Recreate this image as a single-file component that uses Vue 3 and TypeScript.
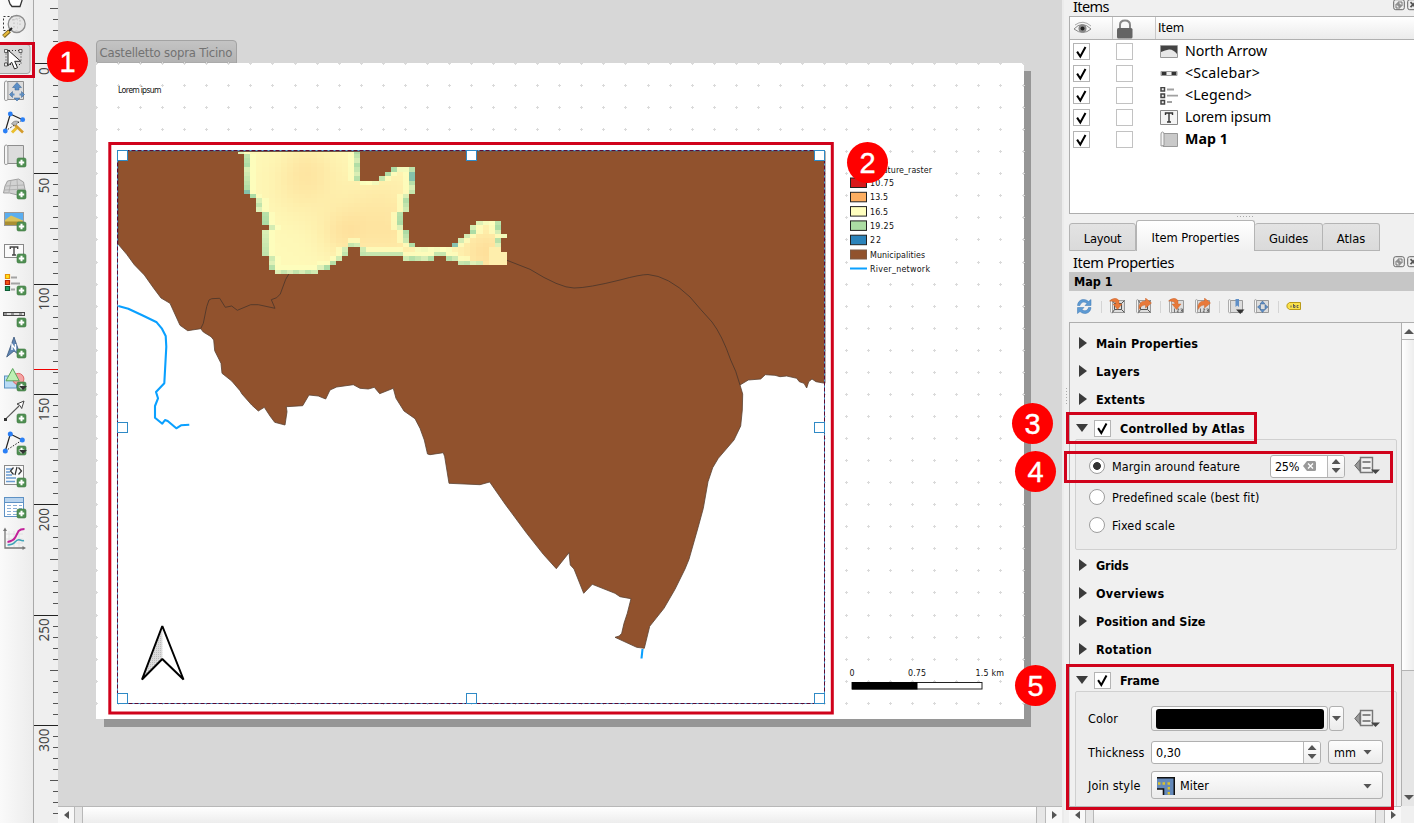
<script setup lang="ts">
type Tool = { id: string; art: string }

const badge = (y = 19, menu = false): string =>
  `<rect x="17" y="${y}" width="9" height="9" rx="1.6" fill="#4f8f52" stroke="#3f7a43" stroke-width=".6"/>` +
  `<path d="M21.5 ${y + 1.8}v5.4M18.8 ${y + 4.5}h5.4" stroke="#fff" stroke-width="2"/>` +
  (menu ? `<path d="M19 ${y + 4}h8l-4 4z" fill="#333"/>` : '')

const sheet =
  '<path d="M7.5 6.5h16v18h-16z" fill="#dcdcdc" stroke="#8e8e8e"/><path d="M4.5 24.5V8q0-2 1.7-2t1.7 2v16q0 1.500-1.700 1.500t-1.700-1z" fill="#f4f4f4" stroke="#999"/>'

const tools: Tool[] = [
  { id: 'pan', art: '<path d="M8 19l2 6 2 2.500h8l2-6V14l-4-4z" fill="#fff" stroke="#333" stroke-width="1.300"/>' },
  {
    id: 'zoom',
    art: '<rect x="3.500" y="5.500" width="14" height="14" fill="none" stroke="#333" stroke-dasharray="2 2"/><circle cx="16.700" cy="13" r="8.500" fill="#e4e4e4" fill-opacity=".9" stroke="#8b8b8b" stroke-width="1.300"/><path d="M12 9l8-2M14 8v9M20 9v7" stroke="#aaa" stroke-width=".7" stroke-dasharray="1.500 2" fill="none"/><path d="M3.500 25.500l6-5.500" stroke="#7a6420" stroke-width="4"/><path d="M3.800 25l5.500-5" stroke="#e8bb3c" stroke-width="2.300"/><path d="M9 20l3-3" stroke="#222" stroke-width="2"/>',
  },
  {
    id: 'select',
    art: '<rect x="-3" y="1.500" width="33" height="29" rx="3" fill="#d9d9d9" stroke="#a6a6a6"/><path d="M6 7.500h15v14H6z" fill="none" stroke="#333" stroke-dasharray="1 2"/><path d="M4.500 6.500h3v3h-3zM19 6.500h3v3h-3zM4.500 20h3v3h-3z" fill="#eee" stroke="#444" stroke-width=".8"/><path d="M8 7v15.500l3.700-3.200 2.800 6.700 3-1.300-2.800-6.400h6z" fill="#fff" stroke="#222" stroke-width="1"/>',
  },
  {
    id: 'move-content',
    art:
      sheet +
      '<path d="M17 7.500l4.500 5h-2.500v2.500h-4v-2.500h-2.500zM9.500 19.500l3-3v6zM24.500 19.500l-3-3v6zM17 26l-3-3h6z" fill="#5b8fc7" stroke="#39618f" stroke-width=".5"/><path d="M13 18.500h1.500v2H13zM19.500 18.500H21v2h-1.500z" fill="#5b8fc7"/>',
  },
  {
    id: 'edit-nodes',
    art: '<path d="M5.300 24l5-17 12.400 5.700" fill="none" stroke="#222" stroke-width="1.200"/><path d="M5.300 24l17.400-11.300" stroke="#222" stroke-dasharray="1.500 1.500"/><circle cx="10.300" cy="7" r="2.400" fill="#2a7ff5"/><circle cx="22.700" cy="12.700" r="2.400" fill="#2a7ff5"/><circle cx="5.300" cy="24" r="2.400" fill="#2a7ff5"/><path d="M12 25.500l6-6" stroke="#eabf2f" stroke-width="3"/><path d="M14.500 17.500l8.500 8" stroke="#d49b2b" stroke-width="2.600"/><path d="M11.500 17q2-4 7-2.500l-3 4z" fill="#bbb" stroke="#777" stroke-width=".7"/>',
  },
  { id: 'add-map', art: sheet + badge() },
  {
    id: 'add-3d-map',
    art:
      '<path d="M3.500 22q1-8 4-12l11-2 5 3 2 10-8 3-8-2z" fill="#d2d2d2" stroke="#999" stroke-width=".9"/><path d="M6 15l18-1M4.500 19l20-1M11 9.500L9 21M17 8.500l1 15" stroke="#aaa" stroke-width=".8" fill="none"/>' +
      badge(),
  },
  {
    id: 'add-picture',
    art:
      '<rect x="4.500" y="9.500" width="19" height="13" fill="#5aaef0" stroke="#999"/><path d="M5 17l6-4.500 12 5V22H5z" fill="#d9c25c"/><path d="M5 18.500h18V22H5z" fill="#a98f33"/>' +
      badge(),
  },
  {
    id: 'add-label',
    art:
      '<rect x="4.500" y="9.500" width="19" height="13" fill="#fafafa" stroke="#888"/><path d="M10.300 14v-2h7.400v2M14 12v8M12 20h4" fill="none" stroke="#444" stroke-width="1.400"/>' +
      badge(),
  },
  {
    id: 'add-legend',
    art:
      '<path d="M5.500 7.500h4v4h-4z" fill="#ffe21a" stroke="#e5900b" stroke-width="1.200"/><path d="M5.500 13.500h4v4h-4z" fill="#f85515" stroke="#b3230c" stroke-width="1.200"/><path d="M5.500 19.500h4v4h-4z" fill="#1fa163" stroke="#0d5f35" stroke-width="1.200"/><path d="M11 10.500h6M11 16.500h9M11 22.500h4" stroke="#a3a3a3" stroke-width="1.800"/>' +
      badge(),
  },
  {
    id: 'add-scalebar',
    art: '<rect x="3.500" y="13.500" width="21" height="3" fill="#ddd" stroke="#444"/><path d="M4 15h3M11 15h3M19 15h3" stroke="#999" stroke-width="2"/>' + badge(),
  },
  {
    id: 'add-north-arrow',
    art:
      '<path d="M14 6l6.500 19-6.500-5-7.300 6z" fill="#5f86b5" stroke="#38557a" stroke-width=".8"/><path d="M12 19v-5.500l3.500 5V13" fill="none" stroke="#fff" stroke-width="1.400"/>' +
      badge(18),
  },
  {
    id: 'add-shape',
    art:
      '<rect x="4.500" y="13" width="12" height="12" fill="#b9dbf5" stroke="#5c93c0"/><circle cx="18.300" cy="16" r="5.600" fill="#f4a3a3" stroke="#d66"/><path d="M12.700 5.500l6.500 12.300H6z" fill="#bdf0b5" stroke="#5ba45b"/>' +
      badge(19, true),
  },
  {
    id: 'add-arrow',
    art:
      '<path d="M5.300 24.300L19 11" stroke="#555" stroke-width="1.100"/><path d="M24 6l-2.300 7.500-1.700-3-3-1.500z" fill="#fff" stroke="#444"/><rect x="4" y="23" width="3" height="3" fill="#333"/>' +
      badge(),
  },
  {
    id: 'add-node-item',
    art:
      '<path d="M5.300 24l5-17 12 6" fill="none" stroke="#222" stroke-width="1.200"/><path d="M5.300 24l17-11" stroke="#222" stroke-dasharray="1.500 1.500"/><circle cx="10.300" cy="7" r="2.500" fill="#2a7ff5"/><circle cx="22.300" cy="13" r="2.500" fill="#2a7ff5"/><circle cx="5.300" cy="24" r="2.500" fill="#2a7ff5"/>' +
      badge(19, true),
  },
  {
    id: 'add-html',
    art:
      '<rect x="4.500" y="6.500" width="19" height="19" fill="#fafafa" stroke="#8a8a8a"/><path d="M6 10h6M6 13h4M6 16h6M6 19h10M6 22.500h9" stroke="#6a9bd1" stroke-width="1.500"/><path d="M13.500 8.500l-3 3.500 3 3.500M18.500 8.500l3 3.500-3 3.500M17 8l-2 8" fill="none" stroke="#333" stroke-width="1.200"/>' +
      badge(),
  },
  {
    id: 'add-table',
    art:
      '<rect x="4.500" y="6.500" width="19" height="19" fill="#fff" stroke="#5e91c4"/><rect x="5" y="7" width="18" height="4" fill="#b9d4ee"/><path d="M5 11.500h18" stroke="#5e91c4"/><path d="M7 14.500h4M13 14.500h4M19 14.500h3M7 17.500h4M13 17.500h4M19 17.500h3M7 20.500h4M13 20.500h4M7 23.500h4M13 23.500h4" stroke="#88aed6" stroke-width="1.200"/>' +
      badge(18),
  },
  {
    id: 'add-elevation',
    art: '<path d="M9 8v16M14 8v16M19 8v16M6 11h17M6 16h17M6 20h17" stroke="#ddd" stroke-width=".8"/><path d="M5 6v19h19" fill="none" stroke="#777" stroke-width="1.300"/><path d="M5 4.500L3 8h4zM26 25l-3.500-2v4z" fill="#777"/><path d="M7.500 19q6-1 8-5t3-6q2-2 6-2" fill="none" stroke="#c2209a" stroke-width="1.900"/><path d="M7.500 22q5 0 7.500-3t5-2 4 .5" fill="none" stroke="#3fa3b8" stroke-width="1.500"/>',
  },
]

const CHECK = 'M3.600 7.600L6.800 12.600L12 3'

/* ruler ------------------------------------------------------------- */
const ticks = Array.from({ length: 74 }, (_, i) => {
  const n = i - 5
  return { y: Math.round(63 + n * 11.03) + 0.5, from: n % 10 === 0 ? 34 : n % 5 === 0 ? 50 : 53, major: n % 10 === 0, n }
}).filter((t) => t.y > 0 && t.y < 823)
const tickLabels = [0, 50, 100, 150, 200, 250, 300].map((v) => ({ v, y: 64 + v * 2.206 + (v === 0 ? 11 : v < 100 ? 19 : 26) }))

/* page grid --------------------------------------------------------- */
const crosses: string = (() => {
  let d = ''
  for (let i = 0; i <= 42; i++)
    for (let j = 0; j <= 29; j++) {
      const x = Math.round(96 + i * 22.06) + 0.5
      const y = Math.round(63 + j * 22.06) + 0.5
      if (x > 1024 || y > 719) continue
      d += `M${x - 1.5} ${y}h3M${x} ${y - 1.5}v3`
    }
  return d
})()

/* temperature raster: column spans for each row --------------------- */
const spans: number[][][] = [
  [[0, 20]],
  [[1, 20]], [[1, 20]], [[1, 20]],
  [[1, 20], [25, 29]],
  [[1, 20], [24, 29]],
  [[1, 20], [23, 29]],
  [[1, 29]], [[1, 29]], [[1, 29]],
  [[2, 28]],
  [[3, 28]], [[3, 28]], [[3, 28]],
  [[4, 27]], [[4, 27]],
  [[4, 27], [39, 43]],
  [[5, 27], [38, 43]],
  [[4, 28], [38, 43]],
  [[4, 28], [37, 44]],
  [[4, 28], [36, 43]],
  [[4, 29], [35, 43]],
  [[4, 18], [20, 43]],
  [[4, 18], [20, 44]],
  [[5, 17], [27, 32], [34, 44]],
  [[5, 16], [36, 44]],
  [[5, 15]],
  [[6, 13]],
]
const inside = (r: number, c: number): boolean => (r < 0 ? true : (spans[r] ?? []).some(([a, b]) => c >= a && c < b))
const mix = (a: number[], b: number[], t: number): number[] => a.map((v, i) => v + (b[i] - v) * t)
const hot = [
  [10, 8, 4, 0.45],
  [17, 18.5, 3, 0.6],
  [23, 13, 5, 0.55],
  [11, 3, 3, 0.35],
  [25, 20, 3, 0.35],
  [40, 22.5, 3, 0.9],
]
const cells = spans.flatMap((row, r) =>
  row.flatMap(([a, b]) =>
    Array.from({ length: b - a }, (_, k) => {
      const c = a + k
      const side = !inside(r, c - 1) || !inside(r, c + 1)
      const below = !inside(r + 1, c)
      const above = !inside(r - 1, c)
      const noise = ((c * 37 + r * 61 + c * r * 7) % 11) / 11
      let heat = 0
      for (const [x, y, s, w] of hot) heat += w * Math.exp(-((c - x) ** 2 + (0.75 * (r - y)) ** 2) / (2 * s * s))
      let rgb = mix([254, 249, 184], [254, 221, 152], Math.min(1, heat))
      const second = !inside(r, c - 2) || !inside(r, c + 2) || !inside(r + 2, c)
      if (second && !(r > 19 && c > 37)) rgb = mix(rgb, [253, 255, 190], 0.7)
      if (above && r > 0) rgb = mix([254, 255, 190], [240, 248, 186], noise)
      if (below && c < 40) rgb = mix([222, 240, 184], [178, 222, 166], noise)
      if (side && c < 43) rgb = mix([222, 240, 182], [168, 218, 163], noise)
      if ((side && c < 10 && r === 9) || (c === 13 && r === 27) || (c === 28 && (r === 5 || r === 6))) rgb = [132, 194, 170]
      if (c > 34 && c < 40 && above && side && noise > 0.4) rgb = [136, 194, 176]
      if (r > 21 && c > 40) rgb = [254, 238, 172]
      const y = r === 0 ? 151.5 : 154 + (r - 1) * 4.444
      const x = 238 + c * 6.113
      return { x, y, h: (r === 0 ? 154 : 154 + r * 4.444) - y + 0.05, f: `rgb(${rgb.map(Math.round).join(',')})` }
    }),
  ),
)

const handles = [
  [117.500, 150.500], [466.500, 150.500], [814.500, 150.500],
  [117.500, 422.500], [814.500, 422.500],
  [117.500, 693.500], [466.500, 693.500], [814.500, 693.500],
]

const classes = [
  { c: '#d7191c', t: '10.75', w: 24 },
  { c: '#fdae61', t: '13.5', w: 18 },
  { c: '#ffffbf', t: '16.5', w: 18 },
  { c: '#abdda4', t: '19.25', w: 24 },
  { c: '#2b83ba', t: '22', w: 11 },
].map((e, i) => ({ ...e, y: 178 + i * 14.3 }))

/* panels ------------------------------------------------------------ */
const items = [
  { t: 'North Arrow', w: 82, art: '<path d="M.5 2.500h17v12H.5z" fill="#e8e8e8" stroke="#999"/><path d="M1 3h16v8q-4-5-8-4.500T1 9z" fill="#444"/>' },
  { t: '<Scalebar>', w: 75, art: '<rect x=".5" y="6" width="17" height="5" rx="1" fill="#999"/><path d="M2 8.500h4M12 8.500h4" stroke="#333" stroke-width="3"/><path d="M7 8.500h4" stroke="#eee" stroke-width="3"/>' },
  { t: '<Legend>', w: 67, art: '<path d="M1 .5h3.500v3.500H1zM1 7h3.500v3.500H1zM1 13.500h3.500V17H1z" fill="#eee" stroke="#444" stroke-width="1.500"/><path d="M7 2.500h7M7 8.700h11M7 15h5" stroke="#a0a0a0" stroke-width="1.800"/>' },
  { t: 'Lorem ipsum', w: 86, art: '<path d="M.5 1.500h17v14H.5z" fill="#f4f4f4" stroke="#888"/><path d="M5.500 6V4h7v2M9 4v9M7 13h4" fill="none" stroke="#333" stroke-width="1.400"/>' },
  { t: 'Map 1', w: 43, bold: true, art: '<path d="M3 2.500h14.500v13H3z" fill="#c9c9c9" stroke="#999"/><path d="M1 15V3q0-2 1.500-2T4 3v11.500z" fill="#f4f4f4" stroke="#999"/>' },
]

const tabs = [
  { t: 'Layout', w: 37.500, box: 'tab-layout' },
  { t: 'Item Properties', w: 88, box: 'tab-props' },
  { t: 'Guides', w: 39, box: 'tab-guides' },
  { t: 'Atlas', w: 28.500, box: 'tab-atlas' },
]

const mini = '<path d="M3.500 2.500h12v12h-12z" fill="#ddd" stroke="#999"/><path d="M1.500 14V3q0-1.500 1-1.500t1 1.500v12h-1z" fill="#f6f6f6" stroke="#999" stroke-width=".8"/>'
const inArrow = '<path d="M.5 3Q6-2 10 2.500V6h3L8.500 11.500 4 6h3Q7 3 .5 3z" fill="#e8793a" stroke="#c55c20" stroke-width=".4"/>'
const outArrow = '<path d="M4 11.500Q3 3 10.500 3V0l6 5-6 5V7Q6.500 6.500 4 11.500z" fill="#e8793a" stroke="#c55c20" stroke-width=".4"/>'
const extent = '<path d="M5.500 5.500h7v6h-7zM3.500 2.500l2 3M15.500 2.500l-3 3M15.500 14.500l-3-3M3.500 14.500l2-3" fill="none" stroke="#555"/>'
const digits = '<path d="M6.500 10.500v4M9 11h2l-2 3h2M12.500 11h2v1.500h-1.500 1.500V14h-2" fill="none" stroke="#666" stroke-width=".9"/>'
const mapTools: { k: string; art?: string }[] = [
  { k: 'refresh', art: '<path d="M1.500 7.500C2 1 9 0 12.500 3.500L15 1.500v6H9l2-2C8 3 5 4 4 7.500zM15 9.500c-.5 6.500-7.500 7.500-11 4L1.500 15.500v-6H8l-2 2c2.500 2.500 6 1 6.500-2z" fill="#5d9ad3" stroke="#3a75b0" stroke-width=".5"/>' },
  { k: 'sep-1' },
  { k: 'set-extent', art: mini + extent + inArrow },
  { k: 'view-extent', art: mini + extent + outArrow },
  { k: 'sep-2' },
  { k: 'set-scale', art: mini + digits + inArrow },
  { k: 'view-scale', art: mini + digits + outArrow },
  { k: 'sep-3' },
  { k: 'bookmark', art: mini + '<path d="M8.500 1h3.500v8l-1.750-1.500-1.750 1.500z" fill="#5f8fc7"/><path d="M9 11.500h8.500L13.250 16z" fill="#333"/>' },
  { k: 'move', art: mini + '<path d="M9.500 3L12 6H7zM9.500 14.500L7 11.500h5zM4.500 9l3-2.500v5zM15 9l-3-2.500v5z" fill="#5f8fc7" stroke="#39618f" stroke-width=".5"/>' },
  { k: 'sep-4' },
  { k: 'label', art: '<path d="M3.500 4.500h11v7h-11L1 9.500v-3z" fill="#fbe14b" stroke="#b99a1a"/><path d="M5 7.500v2M7.500 6v3.500h1.500v-2H7.500M12.500 7.500h-1.500v2h1.500" fill="none" stroke="#555" stroke-width=".9"/>' },
]

const topSections = [{ t: 'Main Properties', w: 102 }, { t: 'Layers', w: 44 }, { t: 'Extents', w: 49 }]
const midSections = [{ t: 'Grids', w: 32.5 }, { t: 'Overviews', w: 68.5 }, { t: 'Position and Size', w: 109.5 }, { t: 'Rotation', w: 56 }]
const radios = [
  { t: 'Margin around feature', w: 128, on: true },
  { t: 'Predefined scale (best fit)', w: 147.5, on: false },
  { t: 'Fixed scale', w: 63, on: false },
]

const callouts = [1, 2, 3, 4, 5]

/* Spreads a label's glyphs so it occupies the given width in pixels. */
const vFit = {
  mounted(el: HTMLElement, { value }: { value: number }) {
    const n = (el.textContent ?? '').length
    if (n) el.style.letterSpacing = `${(value - el.getBoundingClientRect().width) / n}px`
  },
}
</script>

<template>
  <div class="window">
    <aside class="tools">
      <svg v-for="t in tools" :key="t.id" width="34" height="32" viewBox="0 0 34 32" v-html="t.art" />
    </aside>

    <svg class="ruler" width="25" height="823" viewBox="33 0 25 823">
      <path d="M33.500 0V823" stroke="#a9a9a9" />
      <path v-for="t in ticks" :key="t.n" :d="`M${t.from} ${t.y}H58`" :stroke="t.major ? '#222' : '#555'" />
      <path d="M34 369.500H58" stroke="#f00000" />
      <text v-for="l in tickLabels" :key="l.v" :transform="`translate(48.500 ${l.y}) rotate(-90)`" class="tick">{{ l.v }}</text>
    </svg>

    <main class="stage">
      <svg width="1004" height="806" viewBox="58 0 1004 806">
        <defs>
          <linearGradient id="tabFill" x1="0" y1="0" x2="0" y2="1">
            <stop offset="0" stop-color="#c4c4c4" /><stop offset="1" stop-color="#b3b3b3" />
          </linearGradient>
          <pattern id="hatch" width="2" height="2" patternUnits="userSpaceOnUse">
            <rect width="2" height="2" fill="#dcdcdc" /><rect width="1" height="1" fill="#bdbdbd" />
          </pattern>
        </defs>
        <path d="M96.500 63V44q0-3.500 3.500-3.500H233q3.500 0 3.500 3.500V63z" fill="url(#tabFill)" stroke="#a3a3a3" />
        <text x="99.500" y="57" textLength="133" class="page-tab">Castelletto sopra Ticino</text>
        <rect x="104" y="71" width="927" height="656" fill="#969696" />
        <rect x="96" y="63" width="928" height="656" fill="#fff" />
        <path :d="crosses" stroke="#dadada" fill="none" />
        <text x="118" y="93" textLength="43.500" class="note">Lorem ipsum</text>

        <rect x="118" y="151" width="707" height="553" fill="#fff" />
        <path
          d="M118 151.500H825V383.300L816 381.700 812 379 808.700 381.700 806.700 388 804 383.300 799.300 381.700 796.700 378.300 786.700 376 780 376.700 775 375.300 765.300 374.700 760.700 379 748.300 380 740 385 742.700 394 742.300 410 740.700 426 734 440 718.300 458.300 712.700 467.700 708 481.700 703.300 508.300 698 527.700 689 559.300 685 569 675 589.300 664 608.300 649.700 626.300 644.300 648.300 636.700 647.300 615 637.300 619.300 636 621.700 633.300 624 623.300 627.300 613.300 631 598.700 620 596.700 615 593.300 592.300 584.300 583.700 593.300 574 569 570.300 565 569 552.700 556.300 568.700 543.300 554.300 526.700 533.300 505 504 489.700 482 480 484.700 449 483.300 444.700 456.700 443.300 452.700 430 454.700 427.500 454 424.300 440 420 428.300 415 418.700 404 411 396 398.300 393.300 388.300 379.700 393.700 374.300 387.300 368.300 389 360 388.300 353.300 384.700 336.700 387 330 390 325.700 399 318.300 396 309 395 302.700 405.700 286.300 406.700 287 411.700 285 425 274.700 422.300 270 416 264.300 407.300 258.300 411 251.700 405 242 394 240 390.700 231.700 381 222 373.300 221 363.300 214.700 350.700 213.700 340 211 336.700 203.300 332 200.700 328.700 187.700 330.700 180 325.300 170 303.300 161 298 153.300 287.700 144.300 275 134.300 264.700 126.700 254.300 118 244z"
          fill="#91522d" stroke="#5b4333" stroke-width=".8"
        />
        <path
          d="M200.700 328.700L203.300 323.300 206.700 306.700 209 300 211.700 298.700 219.700 298.300 225.300 307.300 231.700 306 237.300 310.300 250.700 304.700H258.300L275 308.300 271.300 299.700 276.700 297.700 280.300 294 285.700 279.300 289 273.700M507 260.300L530 269.300Q560 288 574 288T620 280Q640 274.500 648 274.500Q668 276 690 297Q700 309 712 322Q722 335 730.700 360Q736 370 740 385"
          fill="none" stroke="#50382a" stroke-width=".9"
        />
        <g shape-rendering="crispEdges">
          <rect v-for="(c, i) in cells" :key="i" :x="c.x" :y="c.y" width="6.150" :height="c.h" :fill="c.f" />
        </g>
        <path
          d="M118.300 306L128.300 308.700 143.300 315.700 156.700 322.300 161.700 328.300 165.700 336 166.300 346.700 164.300 383.300 156 392 158 398.300 155 406V417.700L162.300 423.700 165 420 167.700 421 176.300 428.300 181 425.300 189.300 424.700M642.500 649L641.500 658.500"
          fill="none" stroke="#0aa0ff" stroke-width="2.100" stroke-linejoin="round"
        />

        <path d="M162.300 626L142 679.500 162.300 659z" fill="url(#hatch)" />
        <path d="M162.300 626L142 679.500 162.300 659 183.500 679.500z" fill="none" stroke="#000" stroke-width="2" stroke-linejoin="bevel" />

        <rect x="117.500" y="150.500" width="707" height="553" fill="none" stroke="#5a0a35" />
        <rect x="117.500" y="150.500" width="707" height="553" fill="none" stroke="#4aa3d8" stroke-dasharray="2 4" />
        <rect v-for="(h, i) in handles" :key="i" :x="h[0]" :y="h[1]" width="10" height="10" fill="#fff" stroke="#2f8ac6" />
        <rect x="109.800" y="143.500" width="722.500" height="569.500" fill="none" stroke="#d0021b" stroke-width="3" />

        <rect x="848.500" y="153" width="103" height="124" fill="#fff" />
        <text x="853" y="172.500" textLength="79" class="small">Temperature_raster</text>
        <g v-for="e in classes" :key="e.t">
          <rect x="850.500" :y="e.y" width="16" height="9.500" :fill="e.c" stroke="#222" />
          <text x="870" :y="e.y + 8" :textLength="e.w" class="small">{{ e.t }}</text>
        </g>
        <rect x="850.500" y="250" width="16" height="9" fill="#91522d" stroke="#7c5b47" />
        <text x="870" y="258" textLength="55" class="small">Municipalities</text>
        <path d="M850 268.500h17" stroke="#0aa0ff" stroke-width="2" />
        <text x="870" y="271.800" textLength="60" class="small">River_network</text>

        <text x="849.500" y="676" textLength="5" class="small">0</text>
        <text x="908" y="676" textLength="18" class="small">0.75</text>
        <text x="975.500" y="676" textLength="28.500" class="small">1.5 km</text>
        <rect x="852" y="682.500" width="130" height="6.500" fill="#fff" stroke="#222" />
        <rect x="852" y="682" width="65.500" height="7.500" fill="#000" />
      </svg>
      <div class="hbar"><i class="arrow left"></i><b></b><i class="arrow right"></i></div>
    </main>

    <section class="side">
      <header class="title">
        <span v-fit="36">Items</span>
        <svg width="32" height="12" viewBox="0 0 32 12">
          <rect x=".7" y=".7" width="10.600" height="10" rx="2" fill="#eee" stroke="#666" /><path d="M5 3h4v4H5zM3 5h4v4H3z" fill="#eee" stroke="#666" stroke-width=".9" />
          <rect x="14.700" y=".7" width="10.600" height="10" rx="2" fill="#eee" stroke="#666" /><path d="M17.500 3.200l5 5M22.500 3.200l-5 5" stroke="#555" stroke-width="1.700" />
        </svg>
      </header>
      <div class="tree">
        <div class="tree-head">
          <span class="th-eye">
            <svg width="20" height="16" viewBox="0 0 20 16"><path d="M1 9q8-9 17 0-8 7-17 0z" fill="#f2f2f2" stroke="#888" /><path d="M2 5q8-6 16 1" fill="none" stroke="#aaa" /><circle cx="9.500" cy="8.500" r="4" fill="#888" /><circle cx="9.500" cy="8.500" r="2" fill="#222" /></svg>
          </span>
          <span class="th-lock">
            <svg width="18" height="20" viewBox="0 0 18 20"><path d="M4 10V6q0-4.500 5-4.500T14 6v4" fill="none" stroke="#888" stroke-width="2" /><rect x="1" y="9" width="15.500" height="10.500" rx="1.500" fill="#646464" /></svg>
          </span>
          <span class="th-item"><span v-fit="26">Item</span></span>
        </div>
        <div v-for="it in items" :key="it.t" class="tree-row">
          <svg class="box" width="17" height="17" viewBox="0 0 17 17"><rect x=".5" y=".5" width="16" height="16" fill="#fff" stroke="#b4b4b4" /><path :d="CHECK" transform="translate(.500 1)" fill="none" stroke="#000" stroke-width="2" /></svg>
          <svg class="box lock" width="17" height="17" viewBox="0 0 17 17"><rect x=".5" y=".5" width="16" height="16" fill="#fff" stroke="#c2c2c2" /></svg>
          <svg class="pic" width="19" height="18" viewBox="0 0 19 18" v-html="it.art" />
          <span v-fit="it.w" :class="{ strong: it.bold }">{{ it.t }}</span>
        </div>
      </div>
      <div class="grip"></div>
      <nav class="tabs">
        <div v-for="t in tabs" :key="t.t" class="tab" :class="t.box"><span v-fit="t.w">{{ t.t }}</span></div>
      </nav>
      <header class="title second">
        <span v-fit="101">Item Properties</span>
        <svg width="32" height="12" viewBox="0 0 32 12">
          <rect x=".7" y=".7" width="10.600" height="10" rx="2" fill="#eee" stroke="#666" /><path d="M5 3h4v4H5zM3 5h4v4H3z" fill="#eee" stroke="#666" stroke-width=".9" />
          <rect x="14.700" y=".7" width="10.600" height="10" rx="2" fill="#eee" stroke="#666" /><path d="M17.500 3.200l5 5M22.500 3.200l-5 5" stroke="#555" stroke-width="1.700" />
        </svg>
      </header>
      <div class="caption"><span v-fit="38.500">Map 1</span></div>
      <div class="map-tools">
        <template v-for="m in mapTools" :key="m.k">
          <svg v-if="m.art" width="18" height="17" viewBox="0 0 18 17" v-html="m.art" />
          <i v-else></i>
        </template>
      </div>

      <div class="scroller">
        <div class="props">
          <div v-for="s in topSections" :key="s.t" class="sec"><i class="tri"></i><span v-fit="s.w">{{ s.t }}</span></div>
          <div class="sec open">
            <i class="tri down"></i>
            <svg width="17" height="17" viewBox="0 0 17 17"><rect x=".5" y=".5" width="16" height="16" fill="#fff" stroke="#b4b4b4" /><path :d="CHECK" transform="translate(.500 .500)" fill="none" stroke="#000" stroke-width="2" /></svg>
            <span v-fit="125">Controlled by Atlas</span>
          </div>
          <div class="group atlas">
            <div v-for="r in radios" :key="r.t" class="radio-row">
              <i class="radio" :class="{ on: r.on }"></i>
              <div class="radio-text"><span v-fit="r.w">{{ r.t }}</span></div>
              <template v-if="r.on">
                <div class="spin pct">
                  <span v-fit="24">25%</span>
                  <svg width="13" height="10" viewBox="0 0 13 10"><path d="M4 0h7.500q1.500 0 1.500 1.500v7Q13 10 11.500 10H4L0 5z" fill="#999" /><path d="M5 2.500l5 5M10 2.500l-5 5" stroke="#fff" stroke-width="1.300" /></svg>
                  <div class="steps"><i></i><i></i></div>
                </div>
                <svg class="override" width="27" height="20" viewBox="0 0 27 20"><path d="M6 3.500L.8 9.500 6 15.500z" fill="#999" stroke="#666" /><path d="M6.500 1.500h12v15h-12z" fill="#f0f0f0" stroke="#777" stroke-width="1.400" /><path d="M8.500 6h8M8.500 12h8" stroke="#666" stroke-width="1.600" /><path d="M17 13.500h9l-4.500 4.500z" fill="#444" /></svg>
              </template>
            </div>
          </div>
          <div v-for="s in midSections" :key="s.t" class="sec"><i class="tri"></i><span v-fit="s.w">{{ s.t }}</span></div>
          <div class="sec open frame-head">
            <i class="tri down"></i>
            <svg width="17" height="17" viewBox="0 0 17 17"><rect x=".5" y=".5" width="16" height="16" fill="#fff" stroke="#b4b4b4" /><path :d="CHECK" transform="translate(.500 .500)" fill="none" stroke="#000" stroke-width="2" /></svg>
            <span v-fit="39.500">Frame</span>
          </div>
          <div class="group frame">
            <div class="field color">
              <label><span v-fit="30">Color</span></label>
              <div class="btn swatch"><b></b></div>
              <div class="btn more"><i class="caret"></i></div>
              <svg class="override" width="27" height="20" viewBox="0 0 27 20"><path d="M6 3.500L.8 9.500 6 15.500z" fill="#999" stroke="#666" /><path d="M6.500 1.500h12v15h-12z" fill="#f0f0f0" stroke="#777" stroke-width="1.400" /><path d="M8.500 6h8M8.500 12h8" stroke="#666" stroke-width="1.600" /><path d="M17 13.500h9l-4.500 4.500z" fill="#444" /></svg>
            </div>
            <div class="field thick">
              <label><span v-fit="56.500">Thickness</span></label>
              <div class="spin"><span v-fit="25">0,30</span><div class="steps"><i></i><i></i></div></div>
              <div class="btn unit"><span v-fit="22">mm</span><i class="caret"></i></div>
            </div>
            <div class="field join">
              <label><span v-fit="52.500">Join style</span></label>
              <div class="btn combo">
                <svg width="18" height="18" viewBox="0 0 18 18"><path d="M0 1h17.500v17H7v-6H0z" fill="#6489ba" /><path d="M0 .8h17.300V18M0 12h6.500v6" fill="none" stroke="#111" stroke-width="1.600" /><path d="M1 6.500h2.500M5.500 6.500H8M10.500 6.500H13M11.800 10v2.500M11.800 15v2.500" stroke="#dcc22c" stroke-width="2.300" /></svg>
                <span v-fit="29">Miter</span><i class="caret"></i>
              </div>
            </div>
          </div>
        </div>
        <div class="vbar"><div class="vbtn"><i class="arrow up"></i></div><b></b><div class="vbtn end"><i class="arrow down"></i></div></div>
      </div>
      <div class="hbar props-bar"><i class="arrow left"></i><b></b><i class="arrow right"></i></div>
    </section>

    <div class="splitter"></div>
    <div class="mark m1"></div>
    <div class="mark m3"></div>
    <div class="mark m4"></div>
    <div class="mark m5"></div>
    <div v-for="n in callouts" :key="n" class="ball" :class="'b' + n">{{ n }}</div>
  </div>
</template>

<style>
html, body { margin: 0; overflow: hidden; }
</style>

<style scoped>
.window { position: relative; width: 1414px; height: 823px; overflow: hidden; display: flex; background: #f0f0f0; color: #000; font: 12.5px "DejaVu Sans Condensed", "DejaVu Sans", sans-serif; font-stretch: condensed; }
.window * { box-sizing: border-box; }
span { white-space: nowrap; }
svg { display: block; flex: none; }
.tools { width: 33px; flex: none; display: flex; flex-direction: column; margin-top: -21px; height: 844px; background: linear-gradient(90deg, #fafafa, #ececec); overflow: hidden; }
.ruler { background: #efefef; }
.tick { font: 13.5px "Noto Sans", sans-serif; fill: #444; }
.stage { width: 1004px; flex: none; background: #d7d7d7; }
.page-tab { font: 13px "DejaVu Sans Condensed", "DejaVu Sans", sans-serif; font-stretch: condensed; fill: #727272; }
.small { font: 8.8px "DejaVu Sans Condensed", "DejaVu Sans", sans-serif; font-stretch: condensed; fill: #111; }
.note { font: 8px "Noto Sans", sans-serif; fill: #111; }

.hbar { height: 17px; display: flex; align-items: center; background: #e6e6e6; border-top: 1px solid #b8b8b8; }
.hbar b { flex: 1; height: 16px; margin: 0 8px 0 7px; border: solid #b8b8b8; border-width: 0 1px; background: linear-gradient(#fff, #ededed); }
.arrow { flex: none; width: 17px; height: 16px; display: flex; align-items: center; justify-content: center; background: #f8f8f8; }
.hbar .arrow { border: solid #b8b8b8; border-width: 0 1px 0 0; }
.hbar .arrow.right { border-width: 0 0 0 1px; }
.arrow::after { content: ""; border: solid transparent; border-width: 4.5px 0; }
.arrow.left::after { border-right: 5px solid #555; }
.arrow.right::after { border-left: 5px solid #555; }
.arrow.up::after, .arrow.down::after { border-width: 0 5px; }
.arrow.up::after { border-bottom: 5px solid #555; }
.arrow.down::after { border-top: 5px solid #555; }

.side { width: 352px; flex: none; display: flex; flex-direction: column; padding-left: 7px; border-left: 2px solid #ebebeb; overflow: hidden; }
.side > * { flex: none; margin-left: -2px; }
.title { height: 16px; display: flex; align-items: center; padding-left: 4px; font: 14.5px/15px "Noto Sans", sans-serif; }
.title span { line-height: 13px; margin-top: -3px; }
.title svg { margin: -6px -11px 0 auto; }
.props-bar { width: 332px; }
.tree { height: 198px; border: 1px solid #aeaeae; border-right: 0; background: #fff; font: 14.2px "Noto Sans", sans-serif; }
.tree-head { height: 23px; display: flex; border-bottom: 1px solid #b0b0b0; background: linear-gradient(#fff, #ebebeb); }
.tree-head > span { display: flex; align-items: center; }
.th-eye { width: 43px; border-right: 1px solid #c8c8c8; padding-left: 3px; }
.th-lock { width: 43px; border-right: 1px solid #c8c8c8; padding: 2px 0 0 3px; }
.tree-head > .th-item { padding: 0 0 2px 2px; font: 13px "DejaVu Sans Condensed", sans-serif; font-stretch: condensed; }
.tree-row { height: 22px; display: flex; align-items: center; padding: 1px 0 0 3px; }
.tree-row span { line-height: 20px; margin-top: -2px; }
.lock { margin-left: 26px; }
.pic { margin: 0 6px 0 27px; }
.strong { font-weight: 700; }
.grip { height: 6px; width: 18px; margin: 0 0 0 165px; background: radial-gradient(circle, #aaa 0.7px, transparent 0.9px) 0 1px / 3px 3px repeat-x; }
.tabs { display: flex; align-items: flex-end; height: 31px; font-size: 12.8px; }
.tab { height: 28px; display: flex; align-items: center; justify-content: center; border: 1px solid #b4b4b4; border-left: 0; border-radius: 3px 3px 0 0; background: linear-gradient(#e3e3e3, #dadada); padding-top: 2px; }
.tab-layout { width: 67px; border-left: 1px solid #b4b4b4; }
.tab-props { width: 119px; height: 31px; border-bottom: 0; border-left: 1px solid #b4b4b4; background: linear-gradient(#fff, #f0f0f0); }
.tab-guides { width: 68px; }
.tab-atlas { width: 57px; }
.title.second { height: 21px; padding-top: 3px; }
.title.second span { margin-top: -2px; }
.title.second svg { margin-top: -3px; }
.caption { height: 19px; display: flex; align-items: center; padding-left: 5px; background: #c6c6c6; font-weight: 700; }
.map-tools { height: 31px; display: flex; align-items: center; padding-left: 7px; gap: 8px; }
.map-tools i { width: 1px; height: 12px; margin: 0 -1px 0 -1px; background: #d4d4d4; }
.scroller { height: 484px; display: flex; border: solid #aeaeae; border-width: 1px 0 0 1px; overflow: hidden; }
.props { width: 331px; flex: none; height: 483px; padding: 6px 0 0 6px; overflow: hidden; }
.sec { height: 28px; display: flex; align-items: center; padding-left: 3px; font-weight: 700; }
.tri { width: 8px; height: 12px; margin-right: 9px; background: #3b3b3b; clip-path: polygon(0 0, 100% 50%, 0 100%); }
.open { height: 26px; margin-top: 2px; padding-left: 0; }
.open .tri.down { width: 12px; height: 8px; clip-path: polygon(0 0, 100% 0, 50% 100%); margin-right: 6px; }
.open span { margin-left: 9px; }
.frame-head { margin-top: 4px; }
.group { width: 322px; border: 1px solid #d0d0d0; border-radius: 2px; background: #ececec; margin-left: -1px; }
.atlas { height: 111px; margin: -2px 0 1px -1px; padding-top: 10px; }
.radio-row { height: 28px; display: flex; align-items: center; padding-left: 13px; }
.radio-row:first-child { height: 32px; margin-bottom: 1px; }
.radio-text { width: 158px; margin-left: 7px; }
.radio { width: 16px; height: 16px; border: 1px solid #9d9d9d; border-radius: 50%; background: #fff; }
.radio.on { background: radial-gradient(circle, #333 0 3.5px, #fff 4.3px); }
.spin { display: flex; align-items: center; height: 23px; border: 1px solid #b0b0b0; border-radius: 3px; background: #fff; padding-left: 4px; }
.pct { width: 75px; }
.pct > svg { margin-left: 4px; }
.steps { width: 17px; height: 21px; margin-left: auto; border-left: 1px solid #b8b8b8; display: flex; flex-direction: column; align-items: center; justify-content: center; gap: 4px; background: linear-gradient(#fff, #eee); border-radius: 0 2px 2px 0; }
.steps i { width: 9px; height: 5px; background: #555; clip-path: polygon(50% 0, 100% 100%, 0 100%); }
.steps i + i { transform: scaleY(-1); }
.override { margin-left: 9px; }
.frame { height: 140px; margin-top: -2px; padding: 14px 0 0 12px; }
.field { display: flex; align-items: center; }
.field label { width: 63px; flex: none; }
.btn { display: flex; align-items: center; border: 1px solid #b0b0b0; border-radius: 3px; background: linear-gradient(#fdfdfd, #ebebeb); }
.color { height: 25px; }
.swatch { width: 177px; height: 25px; padding: 2px 3px; }
.swatch b { flex: 1; height: 20px; border-radius: 3px; background: #000; margin-left: 1px; }
.more { width: 15px; height: 25px; margin-left: 1px; justify-content: center; }
.caret { width: 9px; height: 5px; flex: none; background: #555; clip-path: polygon(0 0, 100% 0, 50% 100%); }
.color .override { margin-left: 10px; }
.thick { margin-top: 9px; height: 24px; }
.thick .spin { width: 170px; }
.unit { width: 55px; height: 24px; margin-left: 7px; padding: 0 10px 0 5px; justify-content: space-between; }
.join { margin-top: 7px; height: 28px; }
.combo { width: 232px; height: 28px; padding: 2px 10px 0 5px; }
.combo .caret { margin-left: auto; }
.combo span { margin: -2px 0 0 5px; }
.vbar { flex: 1; min-width: 0; display: flex; flex-direction: column; border-left: 1px solid #b0b0b0; background: #e6e6e6; }
.vbtn { height: 17px; flex: none; overflow: hidden; border-bottom: 1px solid #b4b4b4; background: #f8f8f8; }
.vbar .arrow { width: 14px; }
.vbar b { height: 331px; background: linear-gradient(90deg, #fff, #ededed); border-bottom: 1px solid #b4b4b4; }
.end { margin-top: auto; border: 0; background: none; }
.end .arrow { background: none; }

.splitter { position: absolute; left: 1065px; top: 387px; width: 3px; height: 18px; background: radial-gradient(circle, #aaa 0.7px, transparent 0.9px) 0 0 / 3px 3px; }
.mark { position: absolute; border: 3px solid #d0021b; }
.m1 { left: -4px; top: 42px; width: 39px; height: 36px; }
.m3 { left: 1066px; top: 412px; width: 191px; height: 32px; }
.m4 { left: 1064px; top: 451px; width: 329px; height: 32px; }
.m5 { left: 1066px; top: 664px; width: 328px; height: 146px; }
.ball { position: absolute; width: 41px; height: 41px; border-radius: 50%; background: #f00; color: #fff; font-family: "Liberation Sans", Arial, sans-serif; font-stretch: normal; font-size: 29px; line-height: 42px; text-align: center; -webkit-text-stroke: 0.4px #fff; }
.b1 { left: 47px; top: 41px; }
.b2 { left: 847px; top: 142px; }
.b3 { left: 1012px; top: 403px; }
.b4 { left: 1015px; top: 451px; }
.b5 { left: 1015px; top: 665px; }
</style>
